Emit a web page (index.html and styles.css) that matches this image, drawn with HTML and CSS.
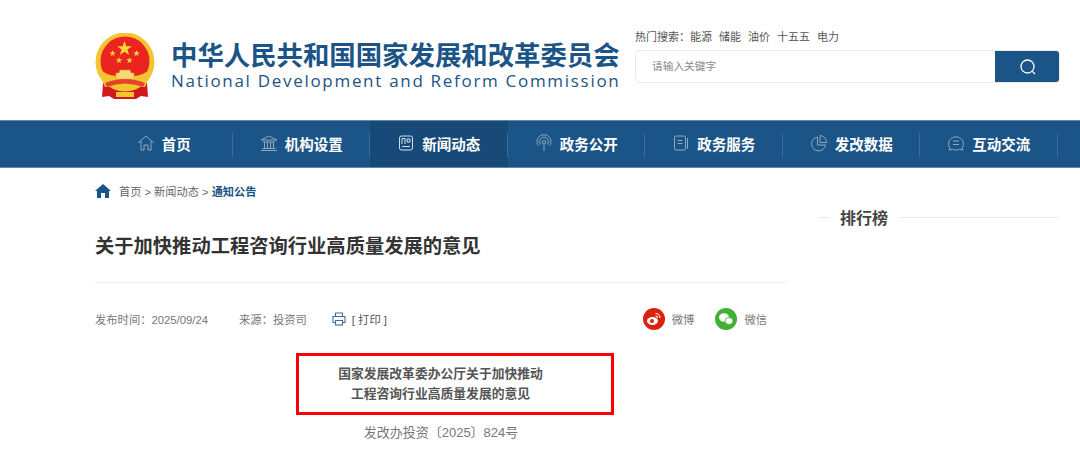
FILE: index.html
```html
<!DOCTYPE html>
<html lang="zh-CN">
<head>
  <meta charset="UTF-8" />
  <title>关于加快推动工程咨询行业高质量发展的意见</title>
  <link rel="stylesheet" href="styles.css">
</head>
<body>
  <!-- Header -->
  <header class="header">
    <div class="brand">
      <svg class="emblem" viewBox="0 0 60 66" width="60" height="66">
        <path d="M8 50 L7 64 L14 63 L19 66 L41 66 L46 63 L53 64 L52 50 Z" fill="#d3171f"/>
        <circle cx="30" cy="29" r="29.500" fill="#f3c52f"/>
        <circle cx="30" cy="28" r="24.500" fill="#ec2420"/>
        <polygon points="29.500,8 31.300,13.300 37,13.300 32.400,16.600 34.200,22 29.500,18.700 24.800,22 26.600,16.600 22,13.300 27.700,13.300" fill="#f9d637"/>
        <polygon points="17.500,17 18.300,19.300 20.800,19.300 18.800,20.800 19.500,23.200 17.500,21.700 15.500,23.200 16.200,20.800 14.200,19.300 16.700,19.300" fill="#f9d637"/>
        <polygon points="41.500,17 42.300,19.300 44.800,19.300 42.800,20.800 43.500,23.200 41.500,21.700 39.500,23.200 40.200,20.800 38.200,19.300 40.700,19.300" fill="#f9d637"/>
        <polygon points="24,24 24.800,26.300 27.300,26.300 25.300,27.800 26,30.200 24,28.700 22,30.200 22.700,27.800 20.700,26.300 23.200,26.300" fill="#f9d637"/>
        <polygon points="34.500,24 35.300,26.300 37.800,26.300 35.800,27.800 36.500,30.200 34.500,28.700 32.500,30.200 33.200,27.800 31.200,26.300 33.700,26.300" fill="#f9d637"/>
        <path d="M5 36 Q12 43 22 43 L38 43 Q48 43 55 36 L58 36 L50 54 L10 54 L2 36 Z" fill="#f3c52f"/>
        <path d="M25 37 L35 37 L36 40 L39 40 L39 46 L21 46 L21 40 L24 40 Z" fill="#f6d977" stroke="#d9a21f" stroke-width="0.500"/>
        <path d="M10 50 Q30 42 50 50 L48 54 Q30 47 12 54 Z" fill="#e4432a"/>
        <rect x="21" y="59" width="18" height="5" fill="#f3c52f"/>
      </svg>
      <div class="brand-text">
        <div class="brand-cn">中华人民共和国国家发展和改革委员会</div>
        <div class="brand-en">National Development and Reform Commission</div>
      </div>
    </div>
    <div class="search-area">
      <div class="hot">
        <span>热门搜索：</span><a>能源</a><a>储能</a><a>油价</a><a>十五五</a><a>电力</a>
      </div>
      <div class="search-box">
        <div class="search-input">请输入关键字</div>
        <div class="search-btn">
          <svg viewBox="0 0 18 18" width="18" height="18" fill="none" stroke="#fff" stroke-width="1.300">
            <circle cx="8.500" cy="8.500" r="6.500"/>
            <path d="M13.500 13.500 L16 16"/>
          </svg>
        </div>
      </div>
    </div>
  </header>

  <!-- Main nav -->
  <nav class="nav">
    <div class="nav-inner">
      <a class="nav-item">
        <svg class="nav-icon" viewBox="0 0 18 18"><path d="M1 9 L9 2 L17 9 M4 7 V16 H7 V11 H11 V16 H14 V7"/></svg>
        首页
      </a>
      <a class="nav-item">
        <svg class="nav-icon" viewBox="0 0 18 18"><path d="M1 6 L9 2 L17 6 Z M3 8 H15 M4.500 8 V14 M7.500 8 V14 M10.500 8 V14 M13.500 8 V14 M2.500 14.500 H15.500 M1 16.500 H17"/></svg>
        机构设置
      </a>
      <a class="nav-item active">
        <svg class="nav-icon nav-icon-light" viewBox="0 0 18 18"><rect x="2.500" y="2" width="13" height="14" rx="2"/><path d="M5 10 V4.500 H8 V10 M10 5 H13 V8 H10 Z M5 12.500 H13"/></svg>
        新闻动态
      </a>
      <a class="nav-item">
        <svg class="nav-icon" viewBox="0 0 18 18"><path d="M9 8 V17 M3.500 12 A7 7 0 1 1 14.500 12 M5.500 10.500 A4.500 4.500 0 1 1 12.500 10.500 M7.500 9.500 A2 2 0 1 1 10.500 9.500"/></svg>
        政务公开
      </a>
      <a class="nav-item">
        <svg class="nav-icon" viewBox="0 0 18 18"><rect x="2.500" y="2" width="11" height="14" rx="1.500"/><path d="M5.500 6.500 H10.500 M5.500 9.500 H10.500 M15.500 4 V15"/></svg>
        政务服务
      </a>
      <a class="nav-item">
        <svg class="nav-icon" viewBox="0 0 18 18"><path d="M7.500 3 A7 7 0 1 0 15.500 11 H7.500 Z M10 1.500 A7 7 0 0 1 16.500 8.500 H10 Z"/></svg>
        发改数据
      </a>
      <a class="nav-item">
        <svg class="nav-icon" viewBox="0 0 18 18"><path d="M3 14 A7.500 7 0 1 1 15 14 L16 16 L12.500 15.300 A8 8 0 0 1 5.500 15.300 L2 16 Z M6 7 H12 M6 10.500 H12"/></svg>
        互动交流
      </a>
    </div>
  </nav>

  <div class="page">
    <!-- Article -->
    <main class="article">
      <div class="crumbs">
        <svg viewBox="0 0 16 14" width="16" height="14"><path d="M8 0 L16 7 L14 7 L14 14 L10 14 L10 9 L6 9 L6 14 L2 14 L2 7 L0 7 Z" fill="#1b5486"/></svg>
        <span>首页 &gt; 新闻动态 &gt; <b>通知公告</b></span>
      </div>
      <h1 class="title">关于加快推动工程咨询行业高质量发展的意见</h1>
      <div class="meta">
        <div class="meta-left">
          <span>发布时间：2025/09/24</span>
          <span>来源：投资司</span>
          <span class="print">
            <svg viewBox="0 0 14 14" width="14" height="14" fill="none" stroke="#3f6f98" stroke-width="1.100">
              <path d="M3.500 4 V1 H10.500 V4 M3 10.500 H1 V4.500 H13 V10.500 H11"/>
              <rect x="3.500" y="8.500" width="7" height="4.500"/>
            </svg>
            [ 打印 ]
          </span>
        </div>
        <div class="share">
          <span class="share-item">
            <svg class="share-icon" viewBox="0 0 22 22">
              <circle cx="11" cy="11" r="11" fill="#d9230f"/>
              <ellipse cx="9.500" cy="13" rx="5.500" ry="4" fill="#fff"/>
              <circle cx="9" cy="13" r="2" fill="#d9230f"/>
              <path d="M12.500 5.500 A4.500 4.500 0 0 1 17 10 M12.500 8 A2 2 0 0 1 14.500 10" fill="none" stroke="#fff" stroke-width="1.200"/>
            </svg>
            微博
          </span>
          <span class="share-item">
            <svg class="share-icon" viewBox="0 0 22 22">
              <circle cx="11" cy="11" r="11" fill="#41b035"/>
              <ellipse cx="9" cy="9.500" rx="5" ry="4.200" fill="#fff"/>
              <ellipse cx="14" cy="13" rx="4" ry="3.400" fill="#fff" stroke="#41b035" stroke-width="0.800"/>
            </svg>
            微信
          </span>
        </div>
      </div>
      <div class="doc">
        <div class="doc-box">
          国家发展改革委办公厅关于加快推动<br>工程咨询行业高质量发展的意见
        </div>
        <div class="doc-no">发改办投资〔2025〕824号</div>
      </div>
    </main>

    <!-- Sidebar -->
    <aside class="side">
      <div class="side-title"><span>排行榜</span></div>
    </aside>
  </div>
</body>
</html>
```

FILE: styles.css
```css
:root {
  --primary: #1b5486;
  --primary-dark: #174a78;
  --border: #e8e8ee;
}

* {
  box-sizing: border-box;
}

html, body {
  height: 455px;
  overflow: hidden;
}

body {
  margin: 0;
  font-family: "Liberation Sans", "Noto Sans CJK SC", sans-serif;
  background: #fff;
  color: #333;
}

.header {
  height: 120px;
  padding: 0 20px 0 95px;
  display: flex;
  justify-content: space-between;
}

.brand {
  display: flex;
  align-items: flex-start;
  padding-top: 33px;
}

.emblem {
  display: block;
  flex-shrink: 0;
}

.brand-text {
  margin-left: 16px;
  padding-top: 8px;
  width: 450px;
  color: var(--primary);
}

.brand-cn {
  font-size: 26.400px;
  line-height: 31px;
  font-weight: 700;
  white-space: nowrap;
}

.brand-en {
  font-family: "Open Sans", sans-serif;
  font-size: 17px;
  line-height: 18px;
  letter-spacing: 1.700px;
  white-space: nowrap;
}

.search-area {
  width: 425px;
  padding-top: 29px;
}

.hot {
  font-size: 11px;
  line-height: 16px;
  color: #555;
  white-space: nowrap;
}

.hot a {
  margin-right: 7px;
}

.search-box {
  display: flex;
  height: 33px;
  margin-top: 5px;
  border: 1px solid #eaeaea;
  border-radius: 4px;
  overflow: hidden;
}

.search-input {
  flex: 1;
  padding-left: 16px;
  font-size: 10.700px;
  line-height: 30px;
  color: #888;
}

.search-btn {
  width: 65px;
  margin: -1px;
  background: var(--primary);
  display: flex;
  align-items: center;
  justify-content: center;
}

.nav {
  height: 48px;
  background: var(--primary);
  border-top: 1px solid #5f86a9;
  border-bottom: 1px solid #5f86a9;
  padding-left: 95px;
}

.nav-inner {
  display: flex;
  height: 100%;
}

.nav-item {
  position: relative;
  width: 137.500px;
  display: flex;
  align-items: center;
  justify-content: center;
  gap: 7px;
  padding-bottom: 2px;
  color: #fff;
  font-size: 14.500px;
  font-weight: 700;
}

.nav-item::after {
  content: "";
  position: absolute;
  right: 0;
  top: 12px;
  height: 24px;
  width: 1px;
  background: #3d6f9a;
}

.nav-item.active {
  background: var(--primary-dark);
}

.nav-icon {
  width: 18px;
  height: 18px;
  fill: none;
  stroke: #8fa9c1;
  stroke-width: 1;
}

.nav-icon-light {
  stroke: #d5dfe8;
}

.page {
  display: flex;
  padding-left: 95px;
}

.article {
  width: 692px;
}

.crumbs {
  display: flex;
  align-items: center;
  gap: 8px;
  height: 16px;
  margin-top: 15px;
  font-size: 11.200px;
  color: #666;
}

.crumbs b {
  color: var(--primary);
}

.title {
  margin: 0;
  padding: 33px 0 20px;
  border-bottom: 1px solid #eeeeee;
  font-size: 19.300px;
  line-height: 30px;
  font-weight: 700;
  color: #333;
}

.meta {
  display: flex;
  justify-content: space-between;
  align-items: center;
  height: 70px;
  padding-top: 2px;
  font-size: 11.300px;
  color: #777;
}

.meta-left {
  display: flex;
  align-items: center;
  gap: 31px;
}

.print {
  display: flex;
  align-items: center;
  gap: 6px;
  margin-left: -6px;
  color: #555;
}

.share {
  display: flex;
  gap: 21px;
  padding-right: 20px;
}

.share-item {
  display: flex;
  align-items: center;
  gap: 7px;
}

.share-icon {
  width: 22px;
  height: 22px;
}

.doc {
  display: flex;
  flex-direction: column;
  align-items: center;
}

.doc-box {
  align-self: flex-start;
  width: 318px;
  height: 62px;
  margin-left: 201px;
  border: 3px solid #f00;
  padding: 8px 29px 0 0;
  text-align: center;
  font-size: 12.800px;
  line-height: 20px;
  font-weight: 700;
  color: #555;
}

.doc-no {
  margin-top: 8px;
  font-size: 13px;
  line-height: 20px;
  color: #777;
}

.side {
  width: 241px;
  margin-left: 31px;
}

.side-title {
  margin-top: 37px;
  height: 24px;
  display: flex;
  align-items: center;
  font-size: 16px;
  font-weight: 700;
  color: #444;
}

.side-title::before,
.side-title::after {
  content: "";
  height: 1px;
  background: var(--border);
}

.side-title::before {
  width: 12px;
  margin-right: 10px;
}

.side-title::after {
  flex: 1;
  margin-left: 11px;
}
```
